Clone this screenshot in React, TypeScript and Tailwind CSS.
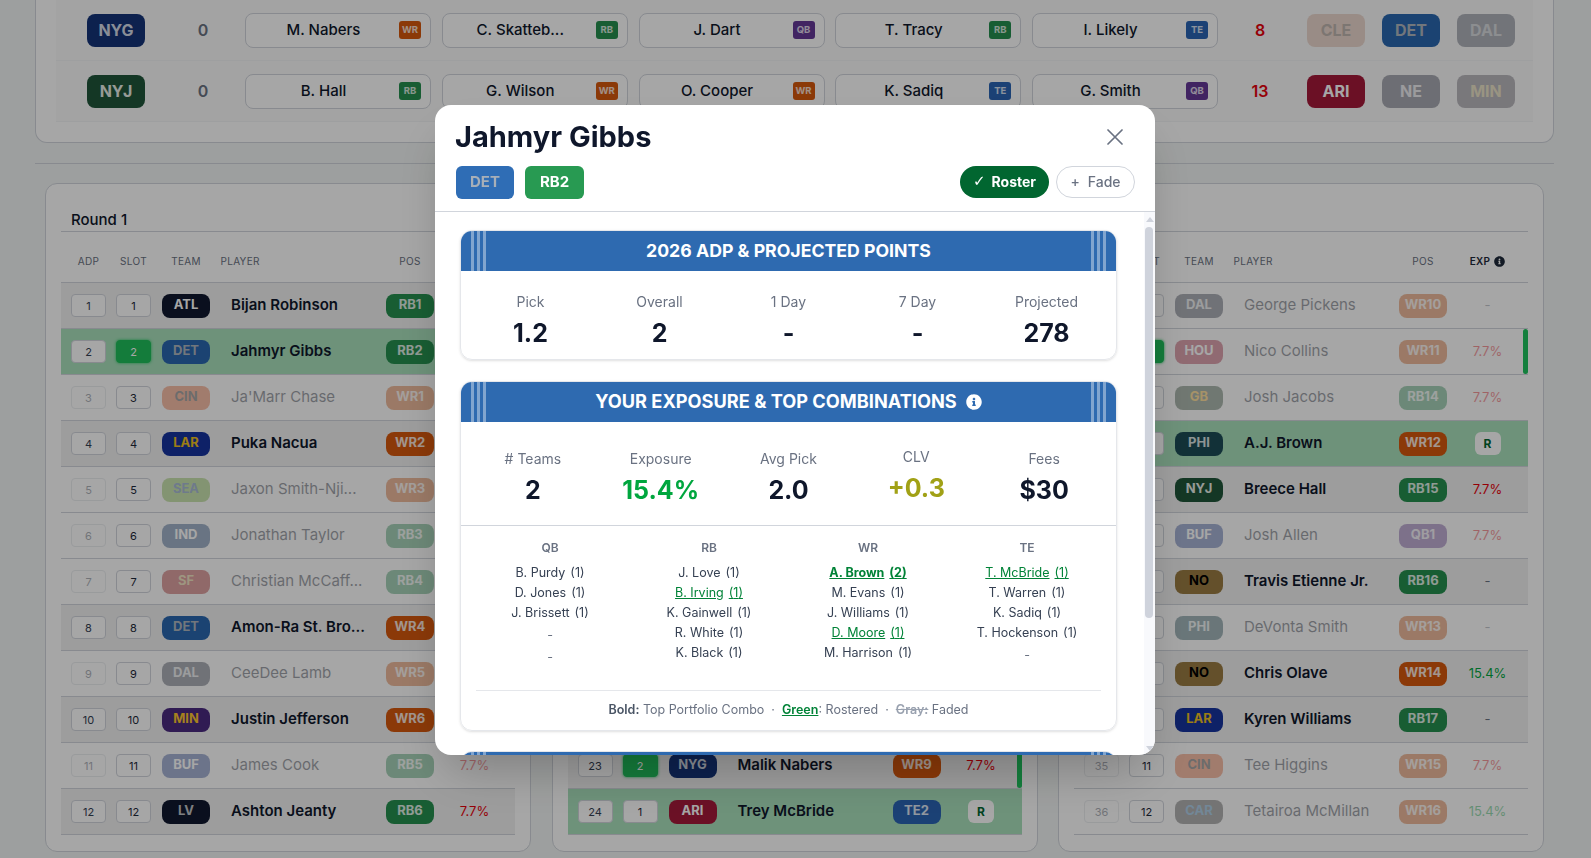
import type { ReactNode } from 'react';
import { FaInfoCircle } from 'react-icons/fa';

type Pos = 'QB' | 'RB' | 'WR' | 'TE';

type PickRow = {
  adp: number;
  slot: number;
  team: string;
  name: string;
  pos: string;
  exp?: string;
  look: 'dim' | 'plain' | 'roster';
  hot?: boolean;
};

const TEAM: Record<string, string> = {
  ATL: 'bg-[#10182f] text-white',
  DET: 'bg-[#2a68b0] text-[#b0b7bf]',
  CIN: 'bg-[#f06028] text-[#222]',
  LAR: 'bg-[#16349f] text-[#f0c020]',
  SEA: 'bg-[#7dbb3a] text-[#2a5a9a]',
  IND: 'bg-[#19437a] text-white',
  SF: 'bg-[#ad1616] text-[#e0c070]',
  DAL: 'bg-[#343b4d] text-[#d8dce0]',
  MIN: 'bg-[#4a2a80] text-[#ffc62f]',
  BUF: 'bg-[#264397] text-white',
  LV: 'bg-[#10182f] text-[#c0c4c8]',
  NYG: 'bg-[#143379] text-[#d4dbe6]',
  NYJ: 'bg-[#1f5539] text-[#e8efe8]',
  HOU: 'bg-[#ad1d3a] text-white',
  GB: 'bg-[#34513a] text-[#ffb612]',
  PHI: 'bg-[#1c4c56] text-[#dbe4e4]',
  NO: 'bg-[#9a7c43] text-black',
  CAR: 'bg-[#444] text-[#3a8ac8]',
  ARI: 'bg-[#a51a3a] text-white',
};

// bye-week chips that are greyed out in the top table
const BYE_DIM: Record<string, string> = {
  CLE: 'bg-[#ecd8ce] text-[#bfb5af]',
  DAL: 'bg-[#b0b3bb] text-[#d8dade]',
  NE: 'bg-[#a8aab2] text-[#eeeef2]',
  MIN: 'bg-[#bab8be] text-[#ece4c8]',
};

const POS_BG: Record<Pos, string> = {
  QB: 'bg-[#643897]',
  RB: 'bg-[#26904f]',
  WR: 'bg-[#d6580d]',
  TE: 'bg-[#2a64b4]',
};

const posClass = (pos: string) => POS_BG[pos.slice(0, 2) as Pos];

const ROUND_1: PickRow[] = [
  { adp: 1, slot: 1, team: 'ATL', name: 'Bijan Robinson', pos: 'RB1', look: 'plain' },
  { adp: 2, slot: 2, team: 'DET', name: 'Jahmyr Gibbs', pos: 'RB2', look: 'roster', hot: true },
  { adp: 3, slot: 3, team: 'CIN', name: "Ja'Marr Chase", pos: 'WR1', look: 'dim' },
  { adp: 4, slot: 4, team: 'LAR', name: 'Puka Nacua', pos: 'WR2', look: 'plain' },
  { adp: 5, slot: 5, team: 'SEA', name: 'Jaxon Smith-Nji...', pos: 'WR3', look: 'dim' },
  { adp: 6, slot: 6, team: 'IND', name: 'Jonathan Taylor', pos: 'RB3', look: 'dim' },
  { adp: 7, slot: 7, team: 'SF', name: 'Christian McCaff...', pos: 'RB4', look: 'dim' },
  { adp: 8, slot: 8, team: 'DET', name: 'Amon-Ra St. Bro...', pos: 'WR4', look: 'plain' },
  { adp: 9, slot: 9, team: 'DAL', name: 'CeeDee Lamb', pos: 'WR5', look: 'dim' },
  { adp: 10, slot: 10, team: 'MIN', name: 'Justin Jefferson', pos: 'WR6', look: 'plain' },
  { adp: 11, slot: 11, team: 'BUF', name: 'James Cook', pos: 'RB5', exp: '7.7%', look: 'dim' },
  { adp: 12, slot: 12, team: 'LV', name: 'Ashton Jeanty', pos: 'RB6', exp: '7.7%', look: 'plain' },
];

const ROUND_2: PickRow[] = [
  { adp: 13, slot: 12, team: 'LV', name: 'Brock Bowers', pos: 'TE1', look: 'dim' },
  { adp: 14, slot: 11, team: 'CIN', name: 'Chase Brown', pos: 'RB7', look: 'dim' },
  { adp: 15, slot: 10, team: 'DAL', name: 'Javonte Williams', pos: 'RB8', look: 'dim' },
  { adp: 16, slot: 9, team: 'NYG', name: 'Cam Skattebo', pos: 'RB9', look: 'dim' },
  { adp: 17, slot: 8, team: 'SEA', name: 'Kenneth Walker', pos: 'RB10', look: 'dim' },
  { adp: 18, slot: 7, team: 'DET', name: 'Sam LaPorta', pos: 'TE3', look: 'dim' },
  { adp: 19, slot: 6, team: 'MIN', name: 'Jordan Addison', pos: 'WR7', look: 'dim' },
  { adp: 20, slot: 5, team: 'ATL', name: 'Drake London', pos: 'WR8', look: 'dim' },
  { adp: 21, slot: 4, team: 'BUF', name: 'Keon Coleman', pos: 'WR10', look: 'dim' },
  { adp: 22, slot: 3, team: 'PHI', name: 'Saquon Barkley', pos: 'RB11', look: 'dim' },
  { adp: 23, slot: 2, team: 'NYG', name: 'Malik Nabers', pos: 'WR9', exp: '7.7%', look: 'plain', hot: true },
  { adp: 24, slot: 1, team: 'ARI', name: 'Trey McBride', pos: 'TE2', exp: 'R', look: 'roster' },
];

const ROUND_3: PickRow[] = [
  { adp: 25, slot: 1, team: 'DAL', name: 'George Pickens', pos: 'WR10', exp: '-', look: 'dim' },
  { adp: 26, slot: 2, team: 'HOU', name: 'Nico Collins', pos: 'WR11', exp: '7.7%', look: 'dim', hot: true },
  { adp: 27, slot: 3, team: 'GB', name: 'Josh Jacobs', pos: 'RB14', exp: '7.7%', look: 'dim' },
  { adp: 28, slot: 4, team: 'PHI', name: 'A.J. Brown', pos: 'WR12', exp: 'R', look: 'roster' },
  { adp: 29, slot: 5, team: 'NYJ', name: 'Breece Hall', pos: 'RB15', exp: '7.7%', look: 'plain' },
  { adp: 30, slot: 6, team: 'BUF', name: 'Josh Allen', pos: 'QB1', exp: '7.7%', look: 'dim' },
  { adp: 31, slot: 7, team: 'NO', name: 'Travis Etienne Jr.', pos: 'RB16', exp: '-', look: 'plain' },
  { adp: 32, slot: 8, team: 'PHI', name: 'DeVonta Smith', pos: 'WR13', exp: '-', look: 'dim' },
  { adp: 33, slot: 9, team: 'NO', name: 'Chris Olave', pos: 'WR14', exp: '15.4%', look: 'plain' },
  { adp: 34, slot: 10, team: 'LAR', name: 'Kyren Williams', pos: 'RB17', exp: '-', look: 'plain' },
  { adp: 35, slot: 11, team: 'CIN', name: 'Tee Higgins', pos: 'WR15', exp: '7.7%', look: 'dim' },
  { adp: 36, slot: 12, team: 'CAR', name: 'Tetairoa McMillan', pos: 'WR16', exp: '15.4%', look: 'dim' },
];

const TOP_TEAMS = [
  {
    team: 'NYG',
    players: [
      ['M. Nabers', 'WR'],
      ['C. Skatteb...', 'RB'],
      ['J. Dart', 'QB'],
      ['T. Tracy', 'RB'],
      ['I. Likely', 'TE'],
    ],
    total: 8,
    byes: ['CLE', 'DET', 'DAL'],
  },
  {
    team: 'NYJ',
    players: [
      ['B. Hall', 'RB'],
      ['G. Wilson', 'WR'],
      ['O. Cooper', 'WR'],
      ['K. Sadiq', 'TE'],
      ['G. Smith', 'QB'],
    ],
    total: 13,
    byes: ['ARI', 'NE', 'MIN'],
  },
] as const;

type Combo = { name: string; n: number; kind?: 'top' | 'roster' };

const COMBOS: { pos: Pos; list: (Combo | null)[] }[] = [
  {
    pos: 'QB',
    list: [{ name: 'B. Purdy', n: 1 }, { name: 'D. Jones', n: 1 }, { name: 'J. Brissett', n: 1 }, null, null],
  },
  {
    pos: 'RB',
    list: [
      { name: 'J. Love', n: 1 },
      { name: 'B. Irving', n: 1, kind: 'roster' },
      { name: 'K. Gainwell', n: 1 },
      { name: 'R. White', n: 1 },
      { name: 'K. Black', n: 1 },
    ],
  },
  {
    pos: 'WR',
    list: [
      { name: 'A. Brown', n: 2, kind: 'top' },
      { name: 'M. Evans', n: 1 },
      { name: 'J. Williams', n: 1 },
      { name: 'D. Moore', n: 1, kind: 'roster' },
      { name: 'M. Harrison', n: 1 },
    ],
  },
  {
    pos: 'TE',
    list: [
      { name: 'T. McBride', n: 1, kind: 'roster' },
      { name: 'T. Warren', n: 1 },
      { name: 'K. Sadiq', n: 1 },
      { name: 'T. Hockenson', n: 1 },
      null,
    ],
  },
];

function ExpCell({ row }: { row: PickRow }) {
  if (row.exp === 'R') {
    return (
      <span className="flex h-[23px] w-[26px] items-center justify-center rounded-md bg-white text-xs font-bold text-green-800">
        R
      </span>
    );
  }
  const dim = row.look === 'dim' ? 'opacity-40' : '';
  if (row.exp === '15.4%') return <span className={`text-[13px] text-green-600 ${dim}`}>15.4%</span>;
  if (row.exp === '7.7%') return <span className={`text-[13px] text-red-600 ${dim}`}>7.7%</span>;
  return <span className={`text-[13px] text-gray-500 ${dim}`}>-</span>;
}

function PlayerRow({ row }: { row: PickRow }) {
  const dim = row.look === 'dim' ? 'opacity-40' : '';
  const bg = row.look === 'roster' ? 'bg-[#a9e0bc]' : row.look === 'plain' ? 'bg-[#f2f2f2]' : 'bg-white';
  return (
    <div className={`relative flex h-[46px] items-center border-b border-gray-300 pl-[10px] ${bg}`}>
      <span className={`flex h-[23px] w-[35px] items-center justify-center rounded border border-gray-300 bg-white pt-px text-[11px] text-gray-700 ${dim}`}>
        {row.adp}
      </span>
      <span
        className={`ml-[10px] flex h-[23px] w-[35px] items-center justify-center rounded border pt-px text-[11px] ${
          row.hot
            ? 'border-[#1fbf5b] bg-[#1fbf5b] text-white shadow-[0_0_3px_#22c55e]'
            : 'border-gray-300 bg-white text-gray-800'
        }`}
      >
        {row.slot}
      </span>
      <span
        className={`ml-[11px] flex h-[24px] w-[48px] items-center justify-center rounded-lg pb-0.5 text-[13px] font-bold ${TEAM[row.team]} ${dim}`}
      >
        {row.team}
      </span>
      <span className={`ml-[21px] w-[155px] whitespace-nowrap text-[15px] text-slate-900 ${row.look === 'dim' ? 'font-normal opacity-40' : 'font-semibold'}`}>
        {row.name}
      </span>
      <span
        className={`flex h-[24px] w-[48px] items-center justify-center rounded-lg pb-0.5 text-[13px] font-bold text-white/85 ${posClass(row.pos)} ${dim}`}
      >
        {row.pos}
      </span>
      <span className="flex w-[81px] justify-center">
        <ExpCell row={row} />
      </span>
      {row.hot && <span className="absolute bottom-0 right-0 top-0 w-[5px] rounded-sm bg-[#1fc45e]" />}
    </div>
  );
}

function RoundPanel({ title, rows }: { title: string; rows: PickRow[] }) {
  return (
    <div className="w-[486px] shrink-0 rounded-xl border border-gray-300 bg-white px-[15px] pb-[16px] pt-[26px]">
      <div className="border-b border-gray-300 pb-[1px] pl-[10px] text-[15px] font-medium leading-[20px] text-slate-900">
        {title}
      </div>
      <div className="flex h-[51px] items-center border-b border-gray-300 pl-[10px] pt-[8px] text-[10px] uppercase tracking-[0.03em] text-gray-500">
        <span className="w-[35px] text-center">ADP</span>
        <span className="ml-[10px] w-[35px] text-center">Slot</span>
        <span className="ml-[11px] w-[48px] text-center">Team</span>
        <span className="ml-[10.5px] w-[165.5px]">Player</span>
        <span className="w-[48px] text-center">Pos</span>
        <span className="flex w-[81px] items-center justify-center gap-1 font-semibold text-gray-800">
          Exp <FaInfoCircle className="text-[11px]" />
        </span>
      </div>
      {rows.map((row) => (
        <PlayerRow key={row.adp} row={row} />
      ))}
    </div>
  );
}

function TopTable() {
  return (
    <div className="rounded-b-xl border border-t-0 border-gray-300 bg-white px-[20px] pb-[20px]">
      {TOP_TEAMS.map((t) => (
        <div key={t.team} className="flex h-[61px] items-center border-b border-gray-100 bg-[#fafafa] pl-[31px]">
          <span className={`flex h-[33px] w-[58px] items-center justify-center rounded-lg text-[16px] font-bold ${TEAM[t.team]}`}>
            {t.team}
          </span>
          <span className="ml-[42px] w-[32px] text-center text-base font-semibold text-gray-500">0</span>
          <div className="ml-[26px] flex gap-[10.75px]">
            {t.players.map(([name, pos]) => (
              <div key={name} className="flex h-[35px] w-[186px] items-center rounded-lg border border-gray-300 bg-white pr-[9px]">
                <span className="flex-1 pl-[2px] text-center text-[15px] font-medium text-slate-900">{name}</span>
                <span className={`flex h-[18px] w-[22px] items-center justify-center rounded-[3px] text-[9.5px] font-bold text-white/80 ${POS_BG[pos]}`}>
                  {pos}
                </span>
              </div>
            ))}
          </div>
          <span className="ml-[26px] w-[32px] text-center text-base font-semibold text-red-600">{t.total}</span>
          <div className="ml-[31px] flex gap-[17px]">
            {t.byes.map((team) => (
              <span
                key={team}
                className={`flex h-[33px] w-[58px] items-center justify-center rounded-lg text-[16px] font-bold ${BYE_DIM[team] ?? TEAM[team]}`}
              >
                {team}
              </span>
            ))}
          </div>
        </div>
      ))}
    </div>
  );
}

function CardHeader({ children }: { children?: ReactNode }) {
  return (
    <div className="relative flex h-[40px] items-center justify-center bg-[#2e6ab0] font-bold uppercase text-white">
      <div className="absolute bottom-0 left-[10px] top-0 flex gap-[3px]">
        <span className="w-[3px] bg-white/40" />
        <span className="w-[3px] bg-white/40" />
        <span className="w-[3px] bg-white/40" />
      </div>
      <div className="absolute bottom-0 right-[10px] top-0 flex gap-[3px]">
        <span className="w-[3px] bg-white/40" />
        <span className="w-[3px] bg-white/40" />
        <span className="w-[3px] bg-white/40" />
      </div>
      {children}
    </div>
  );
}

function Stat({ label, value, color = 'text-slate-900', lift }: { label: string; value: string; color?: string; lift?: boolean }) {
  return (
    <div className={`flex flex-col items-center ${lift ? '-mt-0.5 pb-0.5' : ''}`}>
      <span className="text-sm leading-5 text-gray-500">{label}</span>
      <span className={`mt-[5px] text-[25px] font-bold leading-8 ${color}`}>{value}</span>
    </div>
  );
}

function ComboLine({ combo }: { combo: Combo | null }) {
  if (!combo) return <div className="h-[22px] text-center text-[12.5px] leading-[24px] text-gray-500">-</div>;
  const tone =
    combo.kind === 'top'
      ? 'font-bold text-green-700 underline'
      : combo.kind === 'roster'
        ? 'text-green-700 underline'
        : 'text-gray-700';
  return (
    <div className={`h-5 text-center text-[12.5px] leading-5 ${tone}`}>
      <span>{combo.name}</span>
      <span className="ml-[5px]">({combo.n})</span>
    </div>
  );
}

function PlayerModal() {
  return (
    <div className="absolute inset-0 z-10 flex items-center justify-center bg-black/35 pr-px pt-[2px] backdrop-blur-[0.6px]">
      <div className="flex h-[650px] w-[720px] flex-col overflow-hidden rounded-2xl bg-white shadow-2xl">
        <div className="border-b border-gray-300 pb-[12px] pl-[20px] pr-[20px] pt-[14px]">
          <div className="flex items-center justify-between">
            <h2 className="text-[29px] font-bold leading-9 text-slate-900">Jahmyr Gibbs</h2>
            <svg className="mr-[12px] h-[16px] w-[16px] text-gray-500" viewBox="0 0 16 16" fill="none" stroke="currentColor" strokeWidth="1.7" strokeLinecap="round">
              <path d="M1 1l14 14M15 1L1 15" />
            </svg>
          </div>
          <div className="mt-[11px] flex items-start">
            <span className="ml-px flex h-[33px] w-[58px] items-center justify-center rounded-md bg-[#2f6db5] text-[15px] font-bold text-[#a7afb8]">DET</span>
            <span className="ml-[11px] flex h-[33px] w-[59px] items-center justify-center rounded-md bg-[#289a52] text-[15px] font-bold text-white">RB2</span>
            <span className="ml-auto flex h-[32px] w-[89px] items-center justify-center gap-[6px] rounded-full bg-green-800 text-sm font-bold text-white">
              <span className="font-['DejaVu_Sans'] text-[15px] font-bold">✓</span> Roster
            </span>
            <span className="ml-[7px] flex h-[32px] w-[79px] items-center justify-center gap-[8px] rounded-full border border-gray-300 text-sm font-medium text-gray-500">
              <span>+</span> Fade
            </span>
          </div>
        </div>
        <div className="flex min-h-0 flex-1">
          <div className="flex-1 overflow-hidden pl-[25px] pr-[27px] pt-[18px]">
            <section className="h-[130px] overflow-hidden rounded-xl border border-gray-200 shadow-sm">
              <CardHeader>
                <span className="text-[17.7px]">2026 ADP &amp; Projected Points</span>
              </CardHeader>
              <div className="grid grid-cols-5 px-[5px] pt-[21px]">
                <Stat label="Pick" value="1.2" />
                <Stat label="Overall" value="2" />
                <Stat label="1 Day" value="-" />
                <Stat label="7 Day" value="-" />
                <Stat label="Projected" value="278" />
              </div>
            </section>
            <section className="mt-[21px] overflow-hidden rounded-xl border border-gray-200 shadow-sm">
              <CardHeader>
                <span className="text-[18.2px]">Your Exposure &amp; Top Combinations</span>
                <FaInfoCircle className="ml-[9px] text-[16px]" />
              </CardHeader>
              <div className="grid grid-cols-5 items-center border-b border-gray-300 px-[8px] pb-[19px] pt-[27px]">
                <Stat label="# Teams" value="2" />
                <Stat label="Exposure" value="15.4%" color="text-green-600" />
                <Stat label="Avg Pick" value="2.0" />
                <Stat label="CLV" value="+0.3" color="text-[#a1a116]" lift />
                <Stat label="Fees" value="$30" />
              </div>
              <div className="grid grid-cols-4 gap-x-[11px] px-[15px] pt-[14px]">
                {COMBOS.map((c) => (
                  <div key={c.pos}>
                    <div className="mb-[7px] text-center text-xs font-semibold leading-4 text-gray-500">{c.pos}</div>
                    {c.list.map((combo, i) => (
                      <ComboLine key={i} combo={combo} />
                    ))}
                  </div>
                ))}
              </div>
              <div className="mx-[15px] mt-[23px] border-t border-gray-200 pb-[12px] pt-[11px] text-center text-[12.5px] leading-4 text-gray-500">
                <span className="font-semibold text-gray-600">Bold:</span> Top Portfolio Combo
                <span className="mx-[7px]">·</span>
                <span className="font-semibold text-green-700 underline">Green</span>: Rostered
                <span className="mx-[7px]">·</span>
                <span className="font-semibold text-gray-400 line-through">Gray:</span> Faded
              </div>
            </section>
            <section className="mt-[20px] overflow-hidden rounded-xl border border-gray-200">
              <CardHeader />
            </section>
          </div>
          <div className="flex w-[11px] flex-col items-start bg-[#f8f9fc] pl-[1px]">
            <svg className="ml-[1px] mt-[5px] h-[5px] w-[8px] text-[#cfd3dc]" viewBox="0 0 8 5" fill="currentColor">
              <path d="M4 0l4 5H0z" />
            </svg>
            <div className="mt-[5px] h-[391px] w-[8px] rounded-full bg-[#cfd3dc]" />
            <svg className="ml-[1px] mt-auto mb-[4px] h-[5px] w-[8px] text-[#cfd3dc]" viewBox="0 0 8 5" fill="currentColor">
              <path d="M0 0h8L4 5z" />
            </svg>
          </div>
        </div>
      </div>
    </div>
  );
}

export default function App() {
  return (
    <div className="relative h-[858px] overflow-hidden bg-[#f2f5f4] font-[Inter,sans-serif]">
      <div className="ml-[35px] mr-[37px]">
        <TopTable />
        <div className="mt-[20px] border-t border-gray-300" />
        <div className="mt-[19px] flex gap-[20.5px] px-[10px]">
          <RoundPanel title="Round 1" rows={ROUND_1} />
          <RoundPanel title="Round 2" rows={ROUND_2} />
          <RoundPanel title="Round 3" rows={ROUND_3} />
        </div>
      </div>
      <PlayerModal />
    </div>
  );
}
